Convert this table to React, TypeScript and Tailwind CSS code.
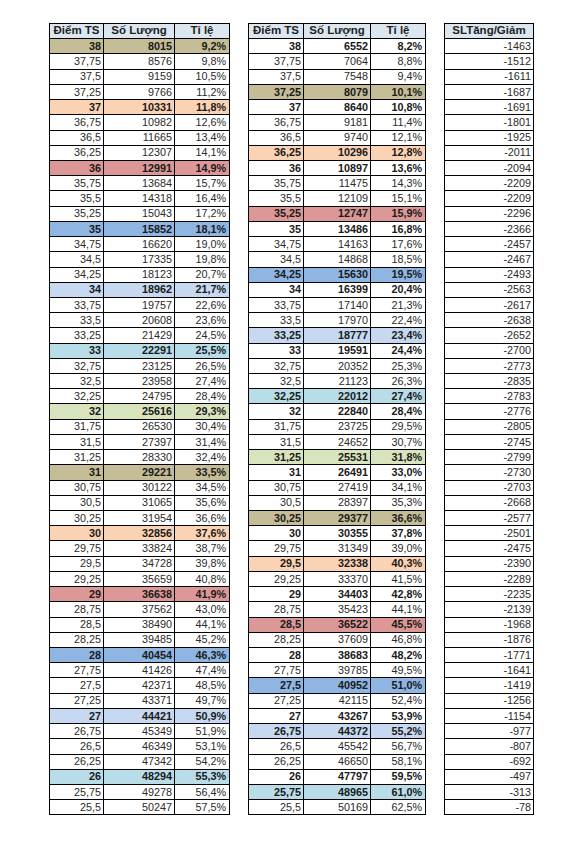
import React from 'react';

type Fill = 'olive' | 'peach' | 'red' | 'blue' | 'sky' | 'cyan' | 'green';

const fillClass: Record<Fill, string> = {
	olive: 'bg-[#c4bd97]',
	peach: 'bg-[#fad3b4]',
	red: 'bg-[#dc9896]',
	blue: 'bg-[#8fb5e2]',
	sky: 'bg-[#c6d9f0]',
	cyan: 'bg-[#b8dde8]',
	green: 'bg-[#d8e4bd]',
};

const cycle: Fill[] = ['olive', 'peach', 'red', 'blue', 'sky', 'cyan', 'green'];

// điểm, số lượng, tỉ lệ (năm trước)
const lastYear = `38|8015|9,2%
37,75|8576|9,8%
37,5|9159|10,5%
37,25|9766|11,2%
37|10331|11,8%
36,75|10982|12,6%
36,5|11665|13,4%
36,25|12307|14,1%
36|12991|14,9%
35,75|13684|15,7%
35,5|14318|16,4%
35,25|15043|17,2%
35|15852|18,1%
34,75|16620|19,0%
34,5|17335|19,8%
34,25|18123|20,7%
34|18962|21,7%
33,75|19757|22,6%
33,5|20608|23,6%
33,25|21429|24,5%
33|22291|25,5%
32,75|23125|26,5%
32,5|23958|27,4%
32,25|24795|28,4%
32|25616|29,3%
31,75|26530|30,4%
31,5|27397|31,4%
31,25|28330|32,4%
31|29221|33,5%
30,75|30122|34,5%
30,5|31065|35,6%
30,25|31954|36,6%
30|32856|37,6%
29,75|33824|38,7%
29,5|34728|39,8%
29,25|35659|40,8%
29|36638|41,9%
28,75|37562|43,0%
28,5|38490|44,1%
28,25|39485|45,2%
28|40454|46,3%
27,75|41426|47,4%
27,5|42371|48,5%
27,25|43371|49,7%
27|44421|50,9%
26,75|45349|51,9%
26,5|46349|53,1%
26,25|47342|54,2%
26|48294|55,3%
25,75|49278|56,4%
25,5|50247|57,5%`;

const thisYear = `38|6552|8,2%
37,75|7064|8,8%
37,5|7548|9,4%
37,25|8079|10,1%
37|8640|10,8%
36,75|9181|11,4%
36,5|9740|12,1%
36,25|10296|12,8%
36|10897|13,6%
35,75|11475|14,3%
35,5|12109|15,1%
35,25|12747|15,9%
35|13486|16,8%
34,75|14163|17,6%
34,5|14868|18,5%
34,25|15630|19,5%
34|16399|20,4%
33,75|17140|21,3%
33,5|17970|22,4%
33,25|18777|23,4%
33|19591|24,4%
32,75|20352|25,3%
32,5|21123|26,3%
32,25|22012|27,4%
32|22840|28,4%
31,75|23725|29,5%
31,5|24652|30,7%
31,25|25531|31,8%
31|26491|33,0%
30,75|27419|34,1%
30,5|28397|35,3%
30,25|29377|36,6%
30|30355|37,8%
29,75|31349|39,0%
29,5|32338|40,3%
29,25|33370|41,5%
29|34403|42,8%
28,75|35423|44,1%
28,5|36522|45,5%
28,25|37609|46,8%
28|38683|48,2%
27,75|39785|49,5%
27,5|40952|51,0%
27,25|42115|52,4%
27|43267|53,9%
26,75|44372|55,2%
26,5|45542|56,7%
26,25|46650|58,1%
26|47797|59,5%
25,75|48965|61,0%
25,5|50169|62,5%`;

const diff = [
	-1463, -1512, -1611, -1687, -1691, -1801, -1925, -2011, -2094, -2209, -2209, -2296, -2366, -2457, -2467,
	-2493, -2563, -2617, -2638, -2652, -2700, -2773, -2835, -2783, -2776, -2805, -2745, -2799, -2730, -2703,
	-2668, -2577, -2501, -2475, -2390, -2289, -2235, -2139, -1968, -1876, -1771, -1641, -1419, -1256, -1154,
	-977, -807, -692, -497, -313, -78,
];

const thisYearFills: Record<string, Fill> = {
	'37,25': 'olive',
	'36,25': 'peach',
	'35,25': 'red',
	'34,25': 'blue',
	'33,25': 'sky',
	'32,25': 'cyan',
	'31,25': 'green',
	'30,25': 'olive',
	'29,5': 'peach',
	'28,5': 'red',
	'27,5': 'blue',
	'26,75': 'sky',
	'25,75': 'cyan',
};

const parse = (raw: string) => raw.split('\n').map((line) => line.split('|'));

const isInteger = (score: string) => !score.includes(',');

const cell = 'flex h-[15.23px] items-center border-r border-b border-black';
const head = `${cell} justify-center bg-[#dce6f0] text-[11.5px] font-bold text-[#1f1f1f]`;

interface ScoreTableProps {
	rows: string[][];
	cols: string;
	getFill: (score: string) => Fill | undefined;
	boldInteger: boolean;
}

const ScoreTable = ({ rows, cols, getFill, boldInteger }: ScoreTableProps) => (
	<div className={`grid ${cols} border-t border-l border-black`}>
		{['Điểm TS', 'Số Lượng', 'Tỉ lệ'].map((h) => (
			<div key={h} className={head}>
				{h}
			</div>
		))}
		{rows.map(([score, count, rate]) => {
			const fill = getFill(score);
			const bold = !!fill || (boldInteger && isInteger(score));
			const tone = `${fill ? fillClass[fill] : 'bg-white'} ${bold ? 'font-bold text-[#1a1a1a]' : 'text-[#2a2a2a]'}`;
			return (
				<React.Fragment key={score}>
					<div className={`${cell} ${tone} justify-end pr-[2px]`}>{score}</div>
					<div className={`${cell} ${tone} justify-end pr-[2px]`}>{count}</div>
					<div className={`${cell} ${tone} justify-end pr-[3px]`}>{rate}</div>
				</React.Fragment>
			);
		})}
	</div>
);

export default function App() {
	return (
		<div className="min-h-[842px] w-[580px] bg-white font-['Liberation_Sans',Arial,sans-serif] text-[10.8px] leading-none">
			<div className="flex items-start gap-[18px] pt-[23px] pl-[49px]">
				<ScoreTable
					rows={parse(lastYear)}
					cols="grid-cols-[54px_71px_55px]"
					getFill={(s) => (isInteger(s) ? cycle[(38 - Number(s)) % 7] : undefined)}
					boldInteger={false}
				/>
				<ScoreTable
					rows={parse(thisYear)}
					cols="grid-cols-[55px_67px_55px]"
					getFill={(s) => thisYearFills[s]}
					boldInteger
				/>
				<div className="grid w-[90px] grid-cols-1 border-t border-l border-black">
					<div className={head}>SLTăng/Giảm</div>
					{diff.map((d, i) => (
						<div key={i} className={`${cell} justify-end bg-white pr-[2px] text-[#2a2a2a]`}>
							{d}
						</div>
					))}
				</div>
			</div>
		</div>
	);
}
